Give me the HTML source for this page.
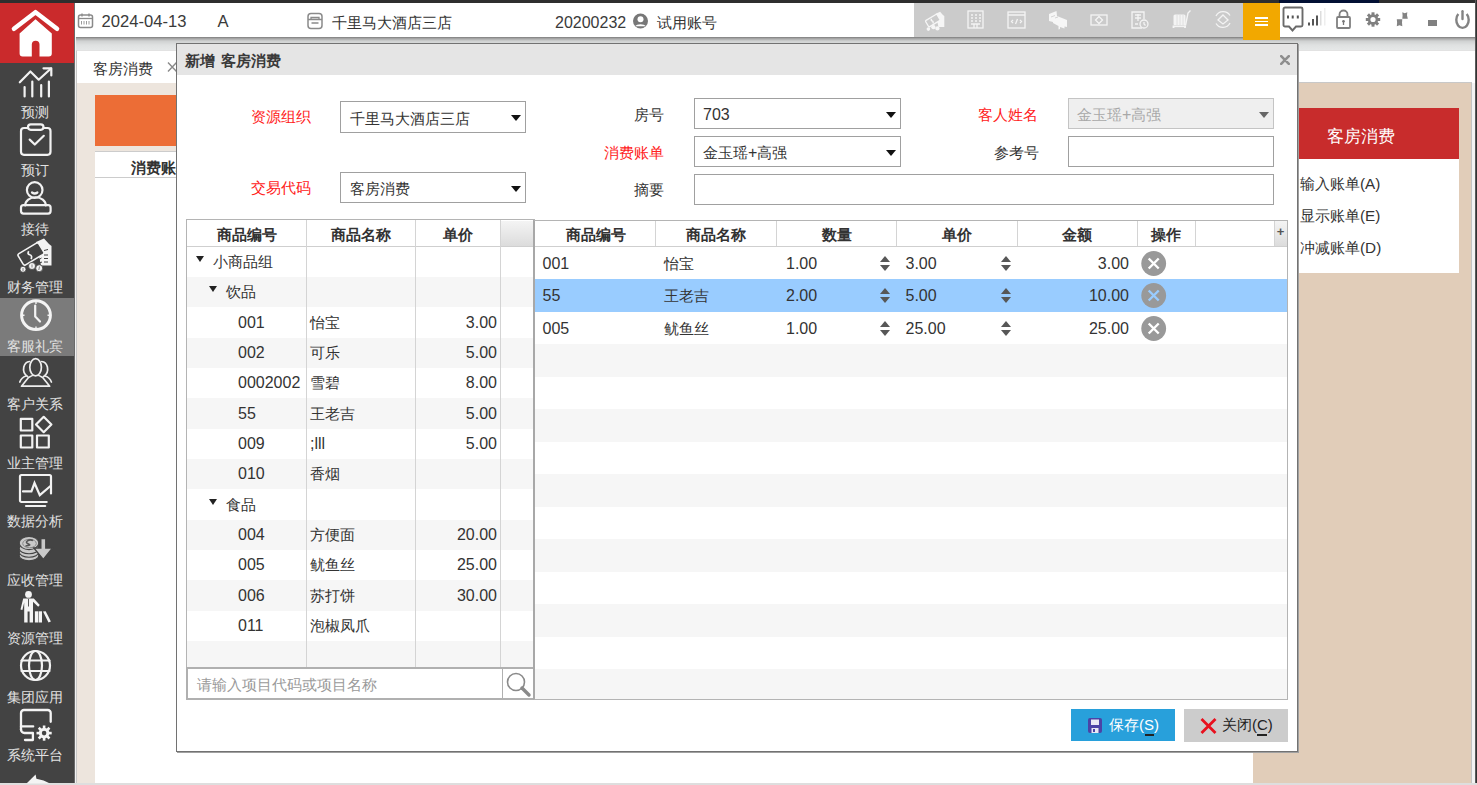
<!DOCTYPE html>
<html><head><meta charset="utf-8">
<style>
*{box-sizing:border-box;margin:0;padding:0}
html,body{width:1477px;height:785px;overflow:hidden;background:#fff;font-family:"Liberation Sans",sans-serif;color:#333}
.a{position:absolute}
.t{position:absolute;white-space:nowrap;line-height:20px;font-size:15.3px}
.n{font-size:16px}
.sel{border:1px solid #a0a0a0;background:#fff}
.arr{position:absolute;width:0;height:0;border-left:5px solid transparent;border-right:5px solid transparent;border-top:6px solid #111}
.hd{font-weight:bold;color:#333}
.tri{position:absolute;width:0;height:0;border-left:4px solid transparent;border-right:4px solid transparent;border-top:6px solid #222}
.spin{position:absolute;width:12px;height:16px;background:linear-gradient(#555,#555) 0 0/0 0 no-repeat}
.spin:before{content:"";position:absolute;left:1px;top:0;border-left:5px solid transparent;border-right:5px solid transparent;border-bottom:6px solid #575757}
.spin:after{content:"";position:absolute;left:1px;top:9px;border-left:5px solid transparent;border-right:5px solid transparent;border-top:6px solid #575757}
.side{font-size:14px;color:#e2e2e2}
</style></head><body>
<!-- top dark bar -->
<div class="a" style="left:0;top:0;width:1477px;height:3px;background:#2e2e2e"></div>
<!-- header -->
<div class="a" style="left:74px;top:3px;width:1403px;height:34px;background:#fff"></div>
<div class="a" style="left:75px;top:37px;width:1402px;height:13px;background:linear-gradient(#7c7c7c,#a4a4a4 1.5px,#cfd1d1 4px,#dfe1e1 8px,#e6e8e8)"></div>
<!-- sidebar -->
<div class="a" style="left:0;top:63px;width:74px;height:722px;background:#434343"></div>
<div class="a" style="left:74px;top:3px;width:1px;height:782px;background:#6a6a6a"></div><div class="a" style="left:75px;top:37px;width:1px;height:748px;background:#f2f2f2"></div>
<div class="a" style="left:0;top:3px;width:74px;height:60px;background:#ca2a2c"></div>
<div class="a" style="left:0;top:297.5px;width:74px;height:58.5px;background:#7b7b7b"></div>
<!-- tab strip -->
<div class="a" style="left:76px;top:50px;width:1399px;height:33px;background:#fff;border-top:1px solid #e2e2e2;border-left:1px solid #c8c8c8"></div>
<!-- content -->
<div class="a" style="left:76px;top:83px;width:1395px;height:700px;background:#ede5dd;border-left:1px solid #c8c8c8"></div>
<div class="a" style="left:1253px;top:83px;width:218px;height:700px;background:#e1cdb9"></div>
<div class="a" style="left:95px;top:95px;width:1158px;height:688px;background:#fff"></div>
<div class="a" style="left:95px;top:95px;width:1158px;height:51px;background:#ec6d36"></div>
<div class="a" style="left:95px;top:146px;width:1158px;height:5px;background:#ede5dd"></div>
<div class="a" style="left:95px;top:151px;width:1158px;height:1px;background:#ccc"></div>
<div class="a" style="left:95px;top:177px;width:1158px;height:1px;background:#ccc"></div>
<div class="t" style="left:131px;top:158px;font-weight:bold">消费账单</div>
<!-- right panel -->
<div class="a" style="left:1270px;top:108px;width:189px;height:51px;background:#c82c2c"></div>
<div class="a" style="left:1270px;top:159px;width:189px;height:114px;background:#fff"></div>
<div class="t" style="left:1326.5px;top:125.5px;font-size:17.2px;color:#fff">客房消费</div>
<div class="t" style="left:1300px;top:174px">输入账单(A)</div>
<div class="t" style="left:1300px;top:206px">显示账单(E)</div>
<div class="t" style="left:1300px;top:238px">冲减账单(D)</div>
<div class="a" style="left:1471px;top:82px;width:1px;height:701px;background:#c4c4c4"></div><div class="a" style="left:177px;top:82px;width:1295px;height:1px;background:#c8c8c8"></div><div class="a" style="left:1472px;top:83px;width:3px;height:700px;background:#f3f3f3"></div><div class="a" style="left:1475px;top:0;width:2px;height:785px;background:linear-gradient(90deg,#777,#333 60%)"></div>
<div class="a" style="left:0;top:783px;width:1477px;height:2px;background:#dedede"></div>

<div class="a" style="left:1279px;top:0;width:100px;height:3px;background:#021034"></div>

<svg class="a" style="left:77px;top:12px" width="17" height="17" viewBox="0 0 17 17"><rect x="1.5" y="3" width="14" height="12.5" rx="2" fill="none" stroke="#8a8a8a" stroke-width="1.5"/><path d="M1.5 6.5H15.5" stroke="#8a8a8a" stroke-width="1.3"/><path d="M5 1.5V4.5M12 1.5V4.5" stroke="#8a8a8a" stroke-width="1.4"/><path d="M4.5 9V12.5M7 9V12.5M9.5 9V12.5M12 9V12.5" stroke="#9a9a9a" stroke-width="1"/></svg>
<div class="t" style="left:101.5px;top:12px;font-size:16.6px;color:#3a3a3a">2024-04-13</div>
<div class="t" style="left:217.5px;top:12px;font-size:16.6px;color:#3a3a3a">A</div>
<svg class="a" style="left:306px;top:12px" width="18" height="18" viewBox="0 0 18 18"><rect x="2" y="1.5" width="14" height="15" rx="3" fill="none" stroke="#8a8a8a" stroke-width="1.5"/><path d="M2 7.5H16M5 7.5V5.5H13V7.5M5.5 11H12.5" stroke="#8a8a8a" stroke-width="1.3" fill="none"/></svg>
<div class="t" style="left:331.5px;top:12.5px;color:#333">千里马大酒店三店</div>
<div class="t n" style="left:555px;top:12.5px;color:#3a3a3a">20200232</div>
<svg class="a" style="left:632px;top:13px" width="17" height="16" viewBox="0 0 17 16"><circle cx="8.5" cy="8" r="7.5" fill="#777"/><circle cx="8.5" cy="6.3" r="3" fill="#fff"/><path d="M3.2 13.2C4.5 10.5 12.5 10.5 13.8 13.2" fill="#fff"/></svg>
<div class="t" style="left:656.5px;top:12.5px;color:#333">试用账号</div>
<div class="a" style="left:914px;top:3px;width:329px;height:34px;background:#cbcbcb"></div>
<svg class="a" style="left:914px;top:3px" width="40" height="34" viewBox="0 0 40 34"><g transform="translate(11 8) scale(0.56) translate(-17 -237)"><g fill="#f6f6f6"><path d="M36 242L44 238.5L49 244L51.5 246V265.5H41Z"/></g><g transform="rotate(-31 31 254)"><rect x="19" y="247.5" width="24" height="13" rx="1.8" fill="#cbcbcb" stroke="#f6f6f6" stroke-width="2.4"/><path d="M30.5 250.5Q27.5 252 29.5 254T28.5 258.5" fill="none" stroke="#f6f6f6" stroke-width="2.4"/></g><g fill="#f6f6f6"><circle cx="23" cy="269.3" r="3.2"/><circle cx="32" cy="266" r="3.8"/><circle cx="39.2" cy="268.2" r="3.8"/></g></g></svg>
<svg class="a" style="left:967px;top:10px" width="17" height="19" viewBox="0 0 17 19" fill="none" stroke="#f4f4f4" stroke-width="1.3"><rect x="1" y="1" width="15" height="17"/><path d="M4 5H6M8 5H10M12 5H14M4 8H6M8 8H10M12 8H14M4 11H6M8 11H10M12 11H14M4 14H13M7 14V18M10 14V18"/></svg>
<svg class="a" style="left:1007px;top:11px" width="19" height="18" viewBox="0 0 19 18" fill="none" stroke="#f4f4f4" stroke-width="1.3"><rect x="1" y="1" width="17" height="16"/><path d="M1 4H18M6 9L4.5 10.5L6 12M13 9L14.5 10.5L13 12M10.5 8L8.5 13"/></svg>
<svg class="a" style="left:1045px;top:6px" width="26" height="26" viewBox="0 0 26 26"><path d="M4 8L11.5 5L12 10L22 14V21L19.5 20.5V22.5L15 21V23L13.5 23.5V20L8 17V16L4 15Z" fill="#f6f6f6"/><path d="M6 11L10 9.5M10 12L13 11" stroke="#cbcbcb" stroke-width="0.8"/></svg>
<svg class="a" style="left:1090px;top:14px" width="18" height="12" viewBox="0 0 18 12" fill="none" stroke="#f4f4f4" stroke-width="1.3"><rect x="1" y="1" width="16" height="10"/><path d="M9 2.5L12.5 6L9 9.5L5.5 6Z"/></svg>
<svg class="a" style="left:1131px;top:11px" width="18" height="18" viewBox="0 0 18 18" fill="none" stroke="#f4f4f4" stroke-width="1.3"><path d="M11 17H1V1H13V8"/><path d="M4 4H10M4 7H10M7 3V10M4 13H7"/><circle cx="13" cy="13" r="4"/><path d="M13 11V13L14.5 14.5"/></svg>
<svg class="a" style="left:1172px;top:9px" width="20" height="21" viewBox="0 0 20 21"><rect x="1.5" y="5.5" width="12" height="11" rx="1.5" fill="#f4f4f4"/><path d="M5 6V16M8 6V16M11 6V16" stroke="#dcdcdc" stroke-width="0.9"/><path d="M13.5 16.5L16 4L18.5 1.5" fill="none" stroke="#f4f4f4" stroke-width="1.4"/><path d="M1.5 16.5V19M13 16.5V19" stroke="#f4f4f4" stroke-width="1.8"/><path d="M1.5 17.5H14" stroke="#f4f4f4" stroke-width="1.3"/></svg>
<svg class="a" style="left:1213px;top:10px" width="20" height="19" viewBox="0 0 20 19" fill="none" stroke="#f4f4f4" stroke-width="1.3"><path d="M3 6A8 8 0 0 1 17 5.5M17 13A8 8 0 0 1 3 13.5"/><path d="M10 5L15 10L10 14L5 10Z"/></svg>
<div class="a" style="left:1243px;top:3px;width:37px;height:37px;background:#f2a800"></div>
<div class="a" style="left:1255px;top:17px;width:13px;height:1.5px;background:#fff"></div>
<div class="a" style="left:1255px;top:20.5px;width:13px;height:1.5px;background:#fff"></div>
<div class="a" style="left:1255px;top:24px;width:13px;height:1.5px;background:#fff"></div>
<svg class="a" style="left:1282px;top:5px" width="22" height="28" viewBox="0 0 22 28"><path d="M3 2.5H19A1.5 1.5 0 0 1 20.5 4V20A1.5 1.5 0 0 1 19 21.5H14L10.5 25.5L7 21.5H3A1.5 1.5 0 0 1 1.5 20V4A1.5 1.5 0 0 1 3 2.5Z" fill="none" stroke="#6a6a6a" stroke-width="1.9"/><rect x="5" y="10.5" width="2" height="3" fill="#555"/><rect x="9.7" y="10.5" width="2" height="3" fill="#555"/><rect x="14.8" y="10.5" width="2" height="3" fill="#555"/></svg>
<svg class="a" style="left:1307px;top:7px" width="20" height="20" viewBox="0 0 20 20"><rect x="1" y="15.5" width="2" height="3" fill="#555"/><rect x="5" y="12" width="2" height="6.5" fill="#555"/><rect x="9" y="8.5" width="2" height="10" fill="#555"/><rect x="13" y="4" width="1.5" height="14.5" fill="#ddd"/><rect x="17" y="1" width="1.5" height="17.5" fill="#eee"/></svg>
<svg class="a" style="left:1335px;top:9px" width="17" height="21" viewBox="0 0 17 21"><path d="M4.5 8V5.5A4 4 0 0 1 12.5 5.5V8" fill="none" stroke="#808080" stroke-width="1.8"/><rect x="2" y="8" width="13" height="11" rx="1" fill="none" stroke="#808080" stroke-width="1.8"/><circle cx="8.5" cy="12.3" r="1.3" fill="#777"/><path d="M8.5 12.5V16" stroke="#777" stroke-width="1.3"/></svg>
<svg class="a" style="left:1364px;top:11px" width="18" height="18" viewBox="0 0 18 18"><g transform="translate(9 8.5)" fill="#808080"><circle r="5.2"/><rect x="-1.5" y="-7.2" width="3" height="3"/><rect x="-1.5" y="-7.2" width="3" height="3" transform="rotate(45)"/><rect x="-1.5" y="-7.2" width="3" height="3" transform="rotate(90)"/><rect x="-1.5" y="-7.2" width="3" height="3" transform="rotate(135)"/><rect x="-1.5" y="-7.2" width="3" height="3" transform="rotate(180)"/><rect x="-1.5" y="-7.2" width="3" height="3" transform="rotate(225)"/><rect x="-1.5" y="-7.2" width="3" height="3" transform="rotate(270)"/><rect x="-1.5" y="-7.2" width="3" height="3" transform="rotate(315)"/><circle r="2.6" fill="#fff"/></g></svg>
<svg class="a" style="left:1395px;top:11px" width="14" height="17" viewBox="0 0 14 17" fill="#838383"><path d="M7.3 1.3L9.8 2.3L12.3 1.3L12 4.3L12.8 7.7L7.3 7.7L7.6 4.5Z"/><path d="M1.8 8.3L7.3 8.3L7 11.5L7.3 15.3L4.5 14.3L1.8 15.3L2.1 11.8Z"/></svg>
<div class="a" style="left:1427.5px;top:20px;width:9px;height:5.5px;background:#808080"></div>
<svg class="a" style="left:1454px;top:9px" width="17" height="21" viewBox="0 0 17 21"><path d="M4.3 5A6.2 8 0 1 0 12.7 5" fill="none" stroke="#838383" stroke-width="2.4"/><path d="M8.5 2.3V10" stroke="#838383" stroke-width="2.4" stroke-linecap="round"/></svg>
<div class="t" style="left:92.5px;top:59px;color:#333">客房消费</div>
<svg class="a" style="left:167px;top:61px" width="10" height="12" viewBox="0 0 10 12"><path d="M1 1.5L9.5 10.5M9.5 1.5L1 10.5" stroke="#8a8a8a" stroke-width="1.4"/></svg>
<svg class="a" style="left:0;top:0" width="74" height="785" viewBox="0 0 74 785"><path d="M14 28.8L35.5 12.2L57 28.8" fill="none" stroke="#fff" stroke-width="4.6" stroke-linecap="round" stroke-linejoin="round"/><path d="M19.6 33.5L35.5 19.3L51.8 33.5V53.6A3 3 0 0 1 48.8 56.6H39.5V44.6A3.85 3.85 0 0 0 31.8 44.6V56.6H22.6A3 3 0 0 1 19.6 53.6Z" fill="#fff"/><g fill="none" stroke="#f2f2f2" stroke-width="2.2" stroke-linecap="round" stroke-linejoin="round"><path d="M19.8 82.3L30.4 71.5L38.7 79.7L51 68.5"/><path d="M43.5 68.3H51.3V75.5"/><path d="M24.6 87V96.5M32.3 81.5V96.5M41.2 85V96.5M48.9 81.5V96.5"/></g><g fill="none" stroke="#f2f2f2" stroke-width="2.2" stroke-linecap="round" stroke-linejoin="round"><path d="M28 128H24A3 3 0 0 0 21 131V151.8A3 3 0 0 0 24 154.8H47.5A3 3 0 0 0 50.5 151.8V131A3 3 0 0 0 47.5 128H43.5"/><rect x="28" y="124.3" width="15.5" height="5.5" rx="2.7"/><path d="M29.7 139.6L34.8 144.5L43.8 135.8"/></g><g fill="none" stroke="#f2f2f2" stroke-width="2.2" stroke-linecap="round" stroke-linejoin="round" stroke-width="1.9"><circle cx="34.7" cy="190" r="7.8"/><path d="M32 192.5Q34.7 194.5 37.4 192.5"/><path d="M25.2 205.5A10 8 0 0 1 45.8 205.5"/><rect x="21" y="205.2" width="29.6" height="8.4" rx="2.5"/></g><g fill="#f4f4f4"><path d="M36 242L44 238.5L49 244L51.5 246V265.5H41Z"/></g><g transform="rotate(-31 31 254)"><rect x="19" y="247.5" width="24" height="13" rx="1.8" fill="#434343" stroke="#f4f4f4" stroke-width="1.6"/><path d="M30.5 250.5Q27.5 252 29.5 254T28.5 258.5" fill="none" stroke="#f4f4f4" stroke-width="1.7"/></g><g stroke="#434343" stroke-width="1" fill="none"><path d="M44 250.5L48 249.5M44 255H48M44 258.5H48M44 262H48M41.5 258L36 261.5M42 262L37 264"/></g><g fill="#f4f4f4" stroke="#434343" stroke-width="0.8"><circle cx="23" cy="269.3" r="3"/><circle cx="32" cy="266" r="3.5"/><circle cx="39.2" cy="268.2" r="3.5"/></g><g stroke="#777" stroke-width="0.9"><path d="M23 268V271M32 264.5V267.5M39.5 266.5L38.8 270"/></g><g fill="none" stroke="#f4f4f4" stroke-linecap="round" stroke-linejoin="round"><circle cx="36" cy="315.2" r="14.4" stroke-width="3"/><path d="M35.2 305.5V316.5L40 321.5" stroke-width="2.2"/></g><g stroke="#f4f4f4" stroke-width="1.4"><path d="M36 302V304M36 326.5V328.5M22.5 315.2H24.5M47.5 315.2H49.5"/></g><g fill="none" stroke="#eeeeee" stroke-width="1.7" stroke-linejoin="round" stroke-linecap="round"><path d="M27.5 376.5Q22.5 373 23.8 367Q25 362 29.5 361.5"/><path d="M43.7 376.5Q48.7 373 47.4 367Q46.2 362 41.7 361.5"/><path d="M19.8 382Q21.5 377.5 26 376"/><path d="M51.4 382Q49.7 377.5 45.2 376"/><path d="M21.5 386.2L28.5 377.5Q35.6 372.5 42.7 377.5L49.7 386.2Z" fill="#434343"/><ellipse cx="35.6" cy="367.3" rx="5.8" ry="8.6" fill="#434343"/></g><g fill="none" stroke="#f2f2f2" stroke-width="2.2" stroke-linecap="round" stroke-linejoin="round" stroke-width="1.8" stroke-linecap="butt" stroke-linejoin="miter"><rect x="20.8" y="418.8" width="11.5" height="11.7"/><path d="M43.7 416.8L51.4 424.5L43.7 432.2L36 424.5Z"/><rect x="20.8" y="435.5" width="11.5" height="12"/><rect x="37" y="435.5" width="11.8" height="12"/></g><g fill="none" stroke="#f2f2f2" stroke-width="2.2" stroke-linecap="round" stroke-linejoin="round" stroke-width="2" stroke-linecap="butt"><path d="M46.7 502H21.5A1.5 1.5 0 0 1 20 500.5V476.5A1.5 1.5 0 0 1 21.5 475H49.5A1.5 1.5 0 0 1 51 476.5V493.5"/><path d="M26 506H45.2" stroke-width="2.2"/><path d="M23 491.4H31.4L34.5 483L39.8 495.2L50.5 486" stroke-linejoin="miter"/></g><g fill="#c9c9c9" stroke="#434343" stroke-width="1.1"><ellipse cx="29" cy="555.5" rx="9.8" ry="5.3"/><ellipse cx="29" cy="552" rx="9.8" ry="5.3"/><ellipse cx="29" cy="548.5" rx="9.8" ry="5.3"/><ellipse cx="29" cy="543" rx="9.8" ry="6.6"/></g><ellipse cx="29.5" cy="543.5" rx="6.8" ry="4.2" fill="none" stroke="#8a8a8a" stroke-width="1"/><path d="M33 540.5Q30 539 27.5 540.8T28.5 544T25.5 546" fill="none" stroke="#555" stroke-width="1.6"/><path d="M40.8 538.5H45.8V548H52.5L43.3 559.5L33.8 548H40.8Z" fill="#c9c9c9" stroke="#434343" stroke-width="1.4"/><g fill="#f4f4f4"><circle cx="28.5" cy="594.4" r="3.4"/><path d="M23.2 598.6H33.8L39.8 605L38.2 606.8L33 601.8V622.5H29.6V611.5H27.6V622.5H24.2V602.5L22.4 610L20.5 609.5Z"/><rect x="34.9" y="611.3" width="3.3" height="11.2"/><rect x="38.7" y="611.3" width="3.3" height="11.2"/><path d="M43 611.6L45.7 611.2L50.9 621.4L48.5 622.6Z"/></g><path d="M28.5 599V606.5" stroke="#434343" stroke-width="0.9"/><g fill="none" stroke="#f2f2f2" stroke-width="2.2" stroke-linecap="round" stroke-linejoin="round" stroke-width="2"><circle cx="35.5" cy="665.5" r="14.5"/><ellipse cx="35.5" cy="665.5" rx="6.5" ry="14.5"/><path d="M21.5 660.5H49.5M21.5 671H49.5"/></g><g fill="none" stroke="#f4f4f4" stroke-width="2.3" stroke-linecap="round" stroke-linejoin="round"><path d="M21 730V713A3 3 0 0 1 24 710H47.7A3 3 0 0 1 50.7 713V721.8"/><path d="M21 726.4H33.2"/><path d="M21 729.5A3.5 3.5 0 0 0 24.5 733H32.9V740H25"/></g><g transform="translate(44.1 733.1)" fill="#f4f4f4"><circle r="5.3"/><rect x="-1.3" y="-7.6" width="2.6" height="3.2" transform="rotate(0)"/><rect x="-1.3" y="-7.6" width="2.6" height="3.2" transform="rotate(45)"/><rect x="-1.3" y="-7.6" width="2.6" height="3.2" transform="rotate(90)"/><rect x="-1.3" y="-7.6" width="2.6" height="3.2" transform="rotate(135)"/><rect x="-1.3" y="-7.6" width="2.6" height="3.2" transform="rotate(180)"/><rect x="-1.3" y="-7.6" width="2.6" height="3.2" transform="rotate(225)"/><rect x="-1.3" y="-7.6" width="2.6" height="3.2" transform="rotate(270)"/><rect x="-1.3" y="-7.6" width="2.6" height="3.2" transform="rotate(315)"/><circle r="2.3" fill="#434343"/></g><path d="M26.5 783.5L35.6 774.5L36.4 778.8Q44 779.8 50 783.5Z" fill="#f4f4f4"/></svg>
<div class="t side" style="left:-1.5px;width:73px;text-align:center;top:101.5px">预测</div>
<div class="t side" style="left:-1.5px;width:73px;text-align:center;top:160.0px">预订</div>
<div class="t side" style="left:-1.5px;width:73px;text-align:center;top:218.5px">接待</div>
<div class="t side" style="left:-1.5px;width:73px;text-align:center;top:277.0px">财务管理</div>
<div class="t side" style="left:-1.5px;width:73px;text-align:center;top:335.5px">客服礼宾</div>
<div class="t side" style="left:-1.5px;width:73px;text-align:center;top:394.0px">客户关系</div>
<div class="t side" style="left:-1.5px;width:73px;text-align:center;top:452.5px">业主管理</div>
<div class="t side" style="left:-1.5px;width:73px;text-align:center;top:511.0px">数据分析</div>
<div class="t side" style="left:-1.5px;width:73px;text-align:center;top:569.5px">应收管理</div>
<div class="t side" style="left:-1.5px;width:73px;text-align:center;top:628.0px">资源管理</div>
<div class="t side" style="left:-1.5px;width:73px;text-align:center;top:686.5px">集团应用</div>
<div class="t side" style="left:-1.5px;width:73px;text-align:center;top:745.0px">系统平台</div>
<!-- dialog -->
<div class="a" style="left:176px;top:43px;width:1122px;height:709px;background:#fff;border:1px solid #727272;box-shadow:1px 1px 0 #a0a0a0"></div>
<div class="a" style="left:177px;top:44px;width:1120px;height:31px;background:#e5e5e5"></div>
<div class="t" style="left:185px;top:50.5px;font-weight:bold;color:#3a3a3a;word-spacing:1.5px">新增 客房消费</div>

<!-- dialog close -->
<svg class="a" style="left:1280px;top:55px" width="10" height="10" viewBox="0 0 10 10"><path d="M1.2 1.2L8.8 8.8M8.8 1.2L1.2 8.8" stroke="#8e8e8e" stroke-width="2.6" stroke-linecap="round"/></svg>
<!-- form labels -->
<div class="t" style="left:251px;top:107px;color:#ff2020">资源组织</div>
<div class="t" style="left:251px;top:178px;color:#ff2020">交易代码</div>
<div class="t" style="left:634px;top:105px">房号</div>
<div class="t" style="left:604px;top:143px;color:#ff2020">消费账单</div>
<div class="t" style="left:634px;top:180px">摘要</div>
<div class="t" style="left:978px;top:105px;color:#ff2020">客人姓名</div>
<div class="t" style="left:994px;top:143px">参考号</div>
<!-- selects -->
<div class="a sel" style="left:340px;top:101px;width:186px;height:32px"></div>
<div class="t" style="left:350px;top:109px">千里马大酒店三店</div>
<div class="arr" style="left:511px;top:115px"></div>
<div class="a sel" style="left:340px;top:172px;width:186px;height:31px"></div>
<div class="t" style="left:350px;top:179px">客房消费</div>
<div class="arr" style="left:511px;top:186px"></div>
<div class="a sel" style="left:694px;top:98px;width:207px;height:31px"></div>
<div class="t n" style="left:703px;top:105px">703</div>
<div class="arr" style="left:886px;top:112px"></div>
<div class="a sel" style="left:694px;top:136px;width:207px;height:31px"></div>
<div class="t" style="left:703px;top:143px">金玉瑶<span class="n">+</span>高强</div>
<div class="arr" style="left:886px;top:150px"></div>
<div class="a sel" style="left:694px;top:174px;width:580px;height:31px"></div>
<div class="a sel" style="left:1068px;top:98px;width:206px;height:31px;background:#efefef;border-color:#c4c4c4"></div>
<div class="t" style="left:1077px;top:105px;color:#a8a8a8">金玉瑶<span class="n">+</span>高强</div>
<div class="arr" style="left:1259px;top:112px;border-top-color:#666"></div>
<div class="a sel" style="left:1068px;top:136px;width:206px;height:31px"></div>
<div class="a" style="left:187px;top:220px;width:348px;height:448px;background:#fff;overflow:hidden">
<div class="a" style="left:0;top:56.93px;width:348px;height:30.33px;background:#f6f6f6"></div>
<div class="a" style="left:0;top:117.59px;width:348px;height:30.33px;background:#f6f6f6"></div>
<div class="a" style="left:0;top:178.25px;width:348px;height:30.33px;background:#f6f6f6"></div>
<div class="a" style="left:0;top:238.91px;width:348px;height:30.33px;background:#f6f6f6"></div>
<div class="a" style="left:0;top:299.57px;width:348px;height:30.33px;background:#f6f6f6"></div>
<div class="a" style="left:0;top:360.23px;width:348px;height:30.33px;background:#f6f6f6"></div>
<div class="a" style="left:0;top:420.89px;width:348px;height:30.33px;background:#f6f6f6"></div>
</div>
<div class="a" style="left:501px;top:221px;width:33px;height:25px;background:linear-gradient(#f4f4f4,#dcdcdc)"></div>
<div class="a" style="left:186px;top:219px;width:349px;height:449px;border:1px solid #b4b4b4;border-bottom:none"></div>
<div class="a" style="left:187px;top:246px;width:347px;height:1px;background:#cfcfcf"></div>
<div class="a" style="left:306.0px;top:220px;width:1px;height:448px;background:#d4d4d4"></div>
<div class="a" style="left:414.5px;top:220px;width:1px;height:448px;background:#d4d4d4"></div>
<div class="a" style="left:500.3px;top:220px;width:1px;height:448px;background:#d4d4d4"></div>
<div class="t hd" style="left:187px;top:225.3px;width:120px;text-align:center">商品编号</div>
<div class="t hd" style="left:300.5px;top:225.3px;width:120px;text-align:center">商品名称</div>
<div class="t hd" style="left:397.5px;top:225.3px;width:120px;text-align:center">单价</div>
<div class="tri" style="left:196px;top:256.1px"></div>
<div class="t" style="left:212.5px;top:252.1px">小商品组</div>
<div class="tri" style="left:209px;top:286.4px"></div>
<div class="t" style="left:225.5px;top:282.4px">饮品</div>
<div class="t n" style="left:238px;top:312.8px">001</div>
<div class="t" style="left:310px;top:312.8px">怡宝</div>
<div class="t n" style="left:397px;width:100px;text-align:right;top:312.8px">3.00</div>
<div class="t n" style="left:238px;top:343.1px">002</div>
<div class="t" style="left:310px;top:343.1px">可乐</div>
<div class="t n" style="left:397px;width:100px;text-align:right;top:343.1px">5.00</div>
<div class="t n" style="left:238px;top:373.4px">0002002</div>
<div class="t" style="left:310px;top:373.4px">雪碧</div>
<div class="t n" style="left:397px;width:100px;text-align:right;top:373.4px">8.00</div>
<div class="t n" style="left:238px;top:403.8px">55</div>
<div class="t" style="left:310px;top:403.8px">王老吉</div>
<div class="t n" style="left:397px;width:100px;text-align:right;top:403.8px">5.00</div>
<div class="t n" style="left:238px;top:434.1px">009</div>
<div class="t n" style="left:310px;top:434.1px">;lll</div>
<div class="t n" style="left:397px;width:100px;text-align:right;top:434.1px">5.00</div>
<div class="t n" style="left:238px;top:464.4px">010</div>
<div class="t" style="left:310px;top:464.4px">香烟</div>
<div class="tri" style="left:209px;top:498.7px"></div>
<div class="t" style="left:225.5px;top:494.7px">食品</div>
<div class="t n" style="left:238px;top:525.1px">004</div>
<div class="t" style="left:310px;top:525.1px">方便面</div>
<div class="t n" style="left:397px;width:100px;text-align:right;top:525.1px">20.00</div>
<div class="t n" style="left:238px;top:555.4px">005</div>
<div class="t" style="left:310px;top:555.4px">鱿鱼丝</div>
<div class="t n" style="left:397px;width:100px;text-align:right;top:555.4px">25.00</div>
<div class="t n" style="left:238px;top:585.7px">006</div>
<div class="t" style="left:310px;top:585.7px">苏打饼</div>
<div class="t n" style="left:397px;width:100px;text-align:right;top:585.7px">30.00</div>
<div class="t n" style="left:238px;top:616.1px">011</div>
<div class="t" style="left:310px;top:616.1px">泡椒凤爪</div>
<div class="a" style="left:186px;top:667px;width:349px;height:33px;border:2px solid #b0b0b0;background:#fff"></div>
<div class="a" style="left:502px;top:669px;width:1px;height:29px;background:#b0b0b0"></div>
<div class="t" style="left:196.5px;top:675px;color:#9a9a9a">请输入项目代码或项目名称</div>
<svg class="a" style="left:505px;top:671px" width="28" height="27" viewBox="0 0 28 27"><circle cx="11" cy="11" r="8.5" fill="none" stroke="#8a8a8a" stroke-width="1.6"/><path d="M17 17L24 24" stroke="#8a8a8a" stroke-width="3.4" stroke-linecap="round"/></svg>
<div class="a" style="left:535px;top:221px;width:753px;height:478px;background:#fff;overflow:hidden">
<div class="a" style="left:0;top:58.0px;width:753px;height:32.5px;background:#99ccff"></div>
<div class="a" style="left:0;top:123.0px;width:753px;height:32.5px;background:#f6f6f6"></div>
<div class="a" style="left:0;top:188.0px;width:753px;height:32.5px;background:#f6f6f6"></div>
<div class="a" style="left:0;top:253.0px;width:753px;height:32.5px;background:#f6f6f6"></div>
<div class="a" style="left:0;top:318.0px;width:753px;height:32.5px;background:#f6f6f6"></div>
<div class="a" style="left:0;top:383.0px;width:753px;height:32.5px;background:#f6f6f6"></div>
<div class="a" style="left:0;top:448.0px;width:753px;height:32.5px;background:#f6f6f6"></div>
</div>
<div class="a" style="left:1274px;top:221px;width:13px;height:25px;background:linear-gradient(#f4f4f4,#dcdcdc)"></div>
<div class="a" style="left:533px;top:220px;width:755px;height:480px;border:1px solid #b4b4b4;border-left:2px solid #a8a8a8"></div>
<div class="a" style="left:535px;top:246px;width:752px;height:1px;background:#cfcfcf"></div>
<div class="a" style="left:655.2px;top:221px;width:1px;height:25px;background:#d4d4d4"></div>
<div class="a" style="left:775.5px;top:221px;width:1px;height:25px;background:#d4d4d4"></div>
<div class="a" style="left:896.2px;top:221px;width:1px;height:25px;background:#d4d4d4"></div>
<div class="a" style="left:1016.5px;top:221px;width:1px;height:25px;background:#d4d4d4"></div>
<div class="a" style="left:1136.8px;top:221px;width:1px;height:25px;background:#d4d4d4"></div>
<div class="a" style="left:1195.0px;top:221px;width:1px;height:25px;background:#d4d4d4"></div>
<div class="a" style="left:1273.8px;top:221px;width:1px;height:25px;background:#d4d4d4"></div>
<div class="t hd" style="left:536px;top:225.3px;width:120px;text-align:center">商品编号</div>
<div class="t hd" style="left:656px;top:225.3px;width:120px;text-align:center">商品名称</div>
<div class="t hd" style="left:776.5px;top:225.3px;width:120px;text-align:center">数量</div>
<div class="t hd" style="left:897px;top:225.3px;width:120px;text-align:center">单价</div>
<div class="t hd" style="left:1017px;top:225.3px;width:120px;text-align:center">金额</div>
<div class="t hd" style="left:1106px;top:225.3px;width:120px;text-align:center">操作</div>
<div class="t" style="left:1274px;top:222px;width:13px;text-align:center;font-size:13px;font-weight:bold;color:#555">+</div>
<div class="t n" style="left:542.5px;top:253.5px">001</div>
<div class="t" style="left:664px;top:253.5px">怡宝</div>
<div class="t n" style="left:786px;top:253.5px">1.00</div>
<div class="spin" style="left:879px;top:255.5px"></div>
<div class="t n" style="left:905.5px;top:253.5px">3.00</div>
<div class="spin" style="left:999.5px;top:255.5px"></div>
<div class="t n" style="left:1029px;width:100px;text-align:right;top:253.5px">3.00</div>
<svg class="a" style="left:1141px;top:250.8px" width="26" height="26" viewBox="0 0 26 26"><circle cx="12.7" cy="12.5" r="12.4" fill="#999"/><path d="M7.7 7.5L17.7 17.5M17.7 7.5L7.7 17.5" stroke="#fff" stroke-width="2.4"/></svg>
<div class="t n" style="left:542.5px;top:286.0px">55</div>
<div class="t" style="left:664px;top:286.0px">王老吉</div>
<div class="t n" style="left:786px;top:286.0px">2.00</div>
<div class="spin" style="left:879px;top:288.0px"></div>
<div class="t n" style="left:905.5px;top:286.0px">5.00</div>
<div class="spin" style="left:999.5px;top:288.0px"></div>
<div class="t n" style="left:1029px;width:100px;text-align:right;top:286.0px">10.00</div>
<svg class="a" style="left:1141px;top:283.3px" width="26" height="26" viewBox="0 0 26 26"><circle cx="12.7" cy="12.5" r="12.4" fill="#999"/><path d="M7.7 7.5L17.7 17.5M17.7 7.5L7.7 17.5" stroke="#9cf" stroke-width="2.4"/></svg>
<div class="t n" style="left:542.5px;top:318.5px">005</div>
<div class="t" style="left:664px;top:318.5px">鱿鱼丝</div>
<div class="t n" style="left:786px;top:318.5px">1.00</div>
<div class="spin" style="left:879px;top:320.5px"></div>
<div class="t n" style="left:905.5px;top:318.5px">25.00</div>
<div class="spin" style="left:999.5px;top:320.5px"></div>
<div class="t n" style="left:1029px;width:100px;text-align:right;top:318.5px">25.00</div>
<svg class="a" style="left:1141px;top:315.8px" width="26" height="26" viewBox="0 0 26 26"><circle cx="12.7" cy="12.5" r="12.4" fill="#999"/><path d="M7.7 7.5L17.7 17.5M17.7 7.5L7.7 17.5" stroke="#fff" stroke-width="2.4"/></svg>
<div class="a" style="left:1071px;top:709px;width:104px;height:32px;background:#28a0db"></div>
<svg class="a" style="left:1088px;top:718px" width="14" height="15" viewBox="0 0 14 15"><rect x="0" y="0" width="14" height="15" rx="2" fill="#4b43a6"/><rect x="3" y="1.5" width="8" height="5.5" fill="#e8e8f4"/><rect x="3.5" y="10" width="7" height="5" fill="#e8e8f4"/><rect x="5" y="11" width="2" height="3" fill="#4b43a6"/></svg>
<div class="t" style="left:1109px;top:715px;color:#fff">保存<span class="n" style="font-size:15px">(S)</span></div>
<div class="a" style="left:1145px;top:734px;width:9px;height:2px;background:#222"></div>
<div class="a" style="left:1184px;top:709px;width:104px;height:33px;background:#cccccc"></div>
<svg class="a" style="left:1200px;top:718px" width="17" height="16" viewBox="0 0 17 16"><path d="M1.5 1L15.5 15M15.5 1L1.5 15" stroke="#e8101e" stroke-width="2.8"/></svg>
<div class="t" style="left:1222px;top:715px;color:#222">关闭<span class="n" style="font-size:15px">(C)</span></div>
<div class="a" style="left:1257px;top:734px;width:10px;height:2px;background:#222"></div>
</body></html>
